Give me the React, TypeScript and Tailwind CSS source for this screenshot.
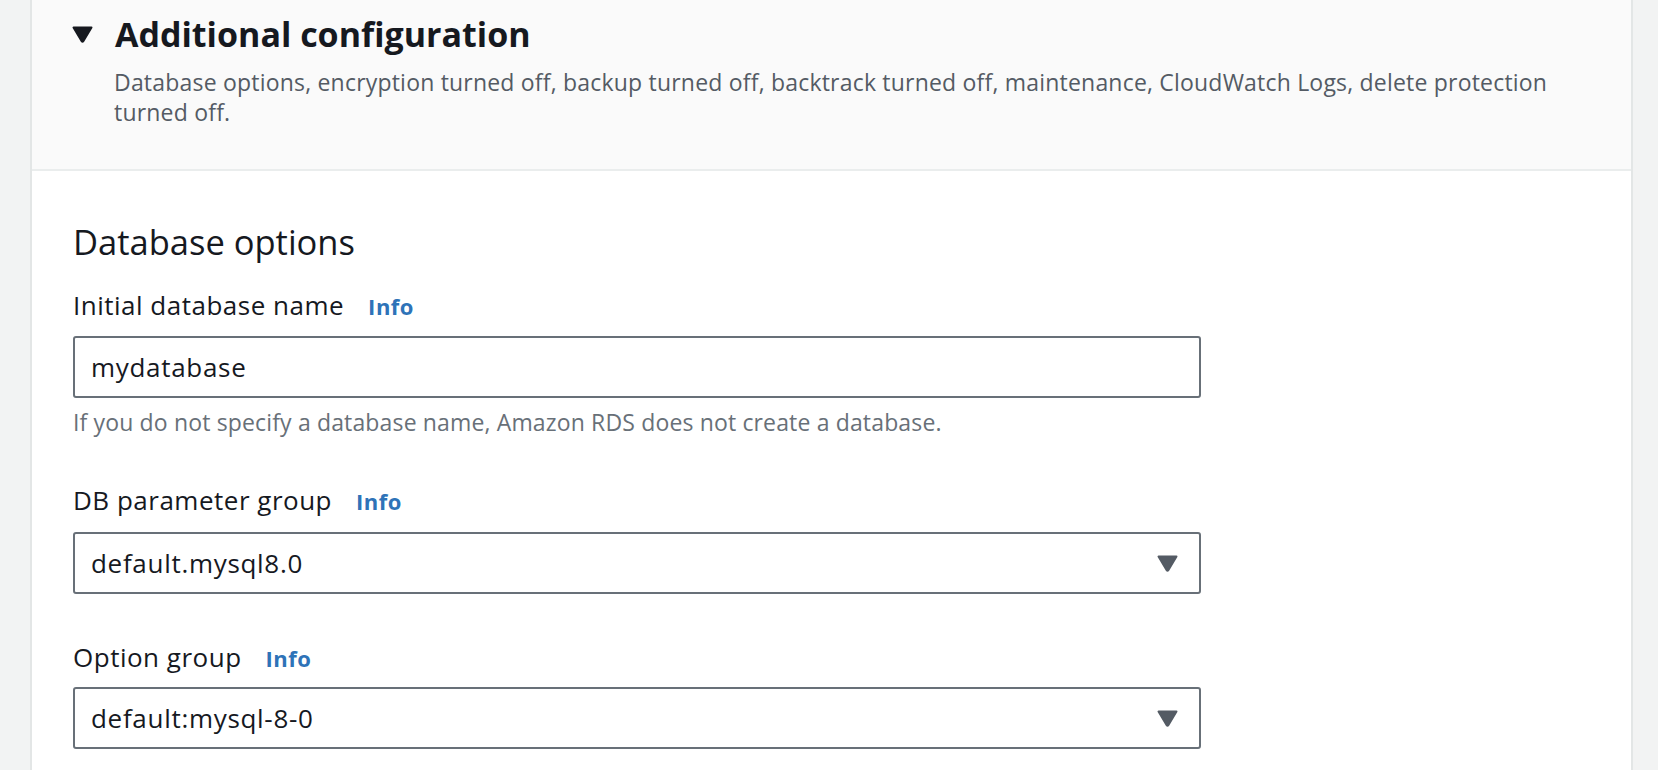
import React from 'react';

// Field label with the blue "Info" link beside it
const FieldLabel = ({ text, className = '' }: { text: string; className?: string }) => (
  <div className={`flex items-baseline ${className}`}>
    <span className="text-[26px] leading-[32px] tracking-[0.5px] text-[#16191f]">{text}</span>
    <a href="#" className="ml-[24px] text-[22px] font-bold tracking-[0.5px] text-[#2e73b8]">
      Info
    </a>
  </div>
);

const SelectBox = ({ value, className = '' }: { value: string; className?: string }) => (
  <div
    className={`flex h-[62px] w-[1128px] items-center justify-between rounded-[3px] border-2 border-[#687078] bg-white pl-[16px] pr-[21px] ${className}`}
  >
    <span className="text-[26px] tracking-[0.7px] text-[#16191f]">{value}</span>
    <svg width="21" height="17" viewBox="0 0 21 17">
      <path d="M1.5 1.5 L19.5 1.5 L11.3 15.2 Q10.5 16.4 9.7 15.2 Z" fill="#545b64" stroke="#545b64" strokeWidth="2" strokeLinejoin="round" />
    </svg>
  </div>
);

export default function App() {
  return (
    <div
      className="flex h-[770px] w-full overflow-hidden bg-[#f2f3f3]"
      style={{ fontFamily: '"Open Sans", "Noto Sans", sans-serif' }}
    >
      <div className="w-[30px] shrink-0" />

      <div className="flex flex-1 flex-col border-x-2 border-[#e3e6e6] bg-white">
        {/* Expandable header */}
        <div className="border-b-2 border-[#eaeded] bg-[#fafafa] pb-[42px] pt-[14px]">
          <div className="flex items-center">
            <svg className="ml-[40px] mr-[22px]" width="21" height="17" viewBox="0 0 21 17">
              <path d="M1.5 1.5 L19.5 1.5 L11.3 15.2 Q10.5 16.4 9.7 15.2 Z" fill="#16191f" stroke="#16191f" strokeWidth="2" strokeLinejoin="round" />
            </svg>
            <h2 className="text-[34px] font-bold leading-[40px] text-[#16191f]">Additional configuration</h2>
          </div>
          <p className="ml-[82px] mt-[13px] max-w-[1470px] text-[23px] leading-[30px] tracking-[0.2px] text-[#545b64]">
            Database options, encryption turned off, backup turned off, backtrack turned off, maintenance, CloudWatch Logs, delete protection turned off.
          </p>
        </div>

        {/* Database options */}
        <div className="flex flex-col pl-[41px] pt-[51px]">
          <h3 className="text-[34.5px] leading-[40px] text-[#16191f]">Database options</h3>

          <FieldLabel text="Initial database name" className="mt-[27px]" />
          <div className="mt-[13px] flex h-[62px] w-[1128px] items-center rounded-[3px] border-2 border-[#687078] bg-white pl-[16px]">
            <span className="text-[26px] tracking-[0.7px] text-[#16191f]">mydatabase</span>
          </div>
          <p className="mt-[10px] text-[23px] leading-[28px] tracking-[0.15px] text-[#687078]">
            If you do not specify a database name, Amazon RDS does not create a database.
          </p>

          <FieldLabel text="DB parameter group" className="mt-[48px]" />
          <SelectBox value="default.mysql8.0" className="mt-[14px]" />

          <FieldLabel text="Option group" className="mt-[47px]" />
          <SelectBox value="default:mysql-8-0" className="mt-[12px]" />
        </div>
      </div>

      <div className="w-[25px] shrink-0" />
    </div>
  );
}
